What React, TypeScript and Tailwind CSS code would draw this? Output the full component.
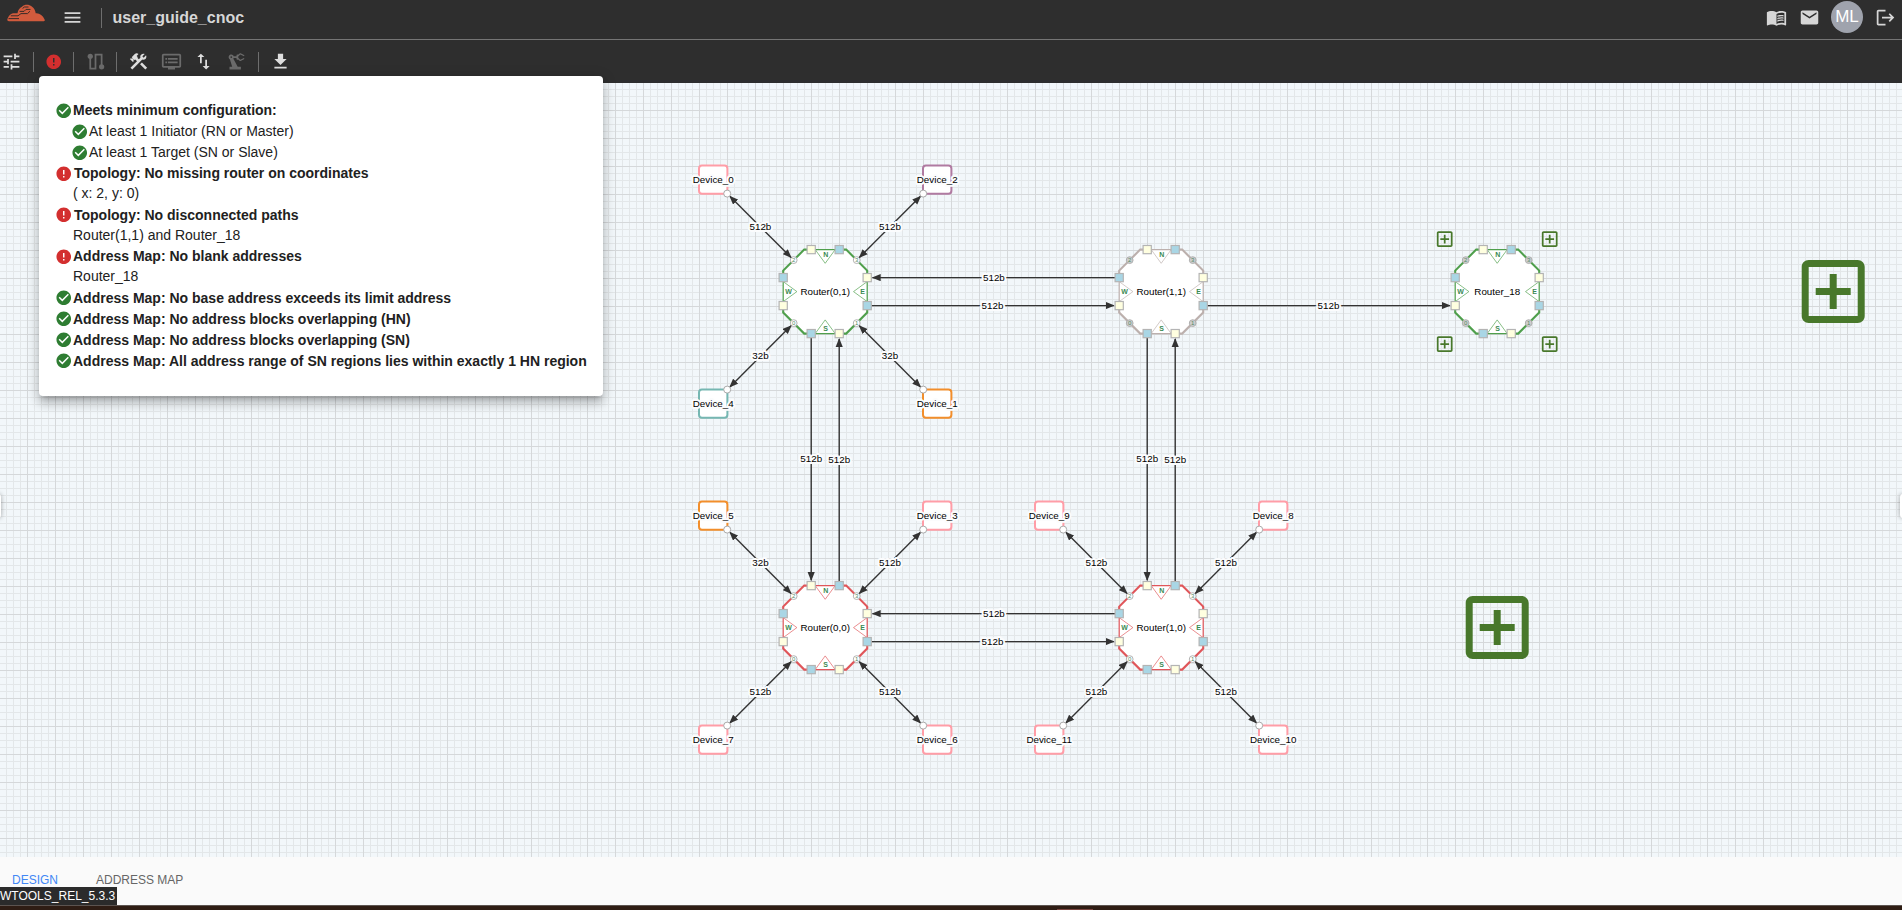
import type { ReactNode } from 'react';
import {
  MdCheckCircle,
  MdConstruction,
  MdDvr,
  MdEmail,
  MdError,
  MdFileDownload,
  MdImportExport,
  MdLogout,
  MdMenu,
  MdMenuBook,
  MdPrecisionManufacturing,
  MdTune,
} from 'react-icons/md';

const STEP = 336;
const ORIGIN_X = 825.2;
const ORIGIN_Y = 208.6;

const GREEN = '#4f9f4c';
const RED = '#e0565a';
const GRAY = '#bcb0ad';
const PINK = '#ff9da7';
const PURPLE = '#b07aa1';
const TEAL = '#76b7b2';
const ORANGE = '#f28e2b';

type Device = { name: string; color: string; sx: number; sy: number; width: string };
type RouterData = { name: string; col: number; row: number; color: string; devices: Device[]; expandable?: boolean };

const routers: RouterData[] = [
  {
    name: 'Router(0,1)', col: 0, row: 0, color: GREEN,
    devices: [
      { name: 'Device_0', color: PINK, sx: -1, sy: -1, width: '512b' },
      { name: 'Device_2', color: PURPLE, sx: 1, sy: -1, width: '512b' },
      { name: 'Device_4', color: TEAL, sx: -1, sy: 1, width: '32b' },
      { name: 'Device_1', color: ORANGE, sx: 1, sy: 1, width: '32b' },
    ],
  },
  { name: 'Router(1,1)', col: 1, row: 0, color: GRAY, devices: [] },
  { name: 'Router_18', col: 2, row: 0, color: GREEN, devices: [], expandable: true },
  {
    name: 'Router(0,0)', col: 0, row: 1, color: RED,
    devices: [
      { name: 'Device_5', color: ORANGE, sx: -1, sy: -1, width: '32b' },
      { name: 'Device_3', color: PINK, sx: 1, sy: -1, width: '512b' },
      { name: 'Device_7', color: PINK, sx: -1, sy: 1, width: '512b' },
      { name: 'Device_6', color: PINK, sx: 1, sy: 1, width: '512b' },
    ],
  },
  {
    name: 'Router(1,0)', col: 1, row: 1, color: RED,
    devices: [
      { name: 'Device_9', color: PINK, sx: -1, sy: -1, width: '512b' },
      { name: 'Device_8', color: PINK, sx: 1, sy: -1, width: '512b' },
      { name: 'Device_11', color: PINK, sx: -1, sy: 1, width: '512b' },
      { name: 'Device_10', color: PINK, sx: 1, sy: 1, width: '512b' },
    ],
  },
];

function Label({ x, y, children }: { x: number; y: number; children: ReactNode }) {
  return (
    <text
      x={x} y={y + 3.1} textAnchor="middle" fontSize="9.8" fill="#000"
      stroke="#fbfcfd" strokeWidth="4" strokeLinejoin="round" paintOrder="stroke"
    >
      {children}
    </text>
  );
}

function Link({ x1, y1, x2, y2, both }: { x1: number; y1: number; x2: number; y2: number; both?: boolean }) {
  return (
    <line
      x1={x1} y1={y1} x2={x2} y2={y2} stroke="#333" strokeWidth="1.4"
      markerEnd="url(#arrow)" markerStart={both ? 'url(#arrow)' : undefined}
    />
  );
}

function AddBox({ x, y, size }: { x: number; y: number; size: number }) {
  return (
    <svg x={x - size / 2} y={y - size / 2} width={size} height={size} viewBox="0 0 24 24">
      <path
        fill="#48782b"
        d="M19 3H5c-1.11 0-2 .9-2 2v14c0 1.1.89 2 2 2h14c1.1 0 2-.9 2-2V5c0-1.1-.9-2-2-2zm0 16H5V5h14v14zm-8-2h2v-4h4v-2h-4V7h-2v4H7v2h4z"
      />
    </svg>
  );
}

const ports = [
  { x: -14, y: -42, input: true },
  { x: 14, y: -42, input: false },
  { x: 42, y: -14, input: true },
  { x: 42, y: 14, input: false },
  { x: -14, y: 42, input: false },
  { x: 14, y: 42, input: true },
  { x: -42, y: -14, input: false },
  { x: -42, y: 14, input: true },
];

const corners = [
  { sx: -1, sy: -1, n: '2' },
  { sx: 1, sy: -1, n: '3' },
  { sx: -1, sy: 1, n: '0' },
  { sx: 1, sy: 1, n: '1' },
];

function RouterNode({ r }: { r: RouterData }) {
  const used = r.devices.length > 0;
  return (
    <g transform={`translate(${ORIGIN_X + r.col * STEP} ${ORIGIN_Y + r.row * STEP})`}>
      <path d="M-21-42H21L42-21V21L21 42H-21L-42 21V-21z" fill="#fff" />
      <path
        d="M-14-42H-21L-42-21V-14M14-42H21L42-21V-14M-14 42H-21L-42 21V14M14 42H21L42 21V14"
        fill="none" stroke={r.color} strokeWidth="2.1"
      />
      <path d="M-14-42H14M-14 42H14M-42-14V14M42-14V14" fill="none" stroke={r.color} strokeWidth="1.2" />
      <path
        d="M-10-42L0-28.3L10-42M-10 42L0 28.3L10 42M-42-10L-28.3 0L-42 10M42-10L28.3 0L42 10"
        fill="none" stroke={r.color} strokeWidth="0.9" opacity="0.75"
      />
      <g fontSize="7" fontWeight="700" fill="#3b8a52" textAnchor="middle">
        <text x="0.5" y="-34.8">N</text>
        <text x="0.5" y="39.2">S</text>
        <text x="-36.6" y="2.5">W</text>
        <text x="37.4" y="2.5">E</text>
      </g>
      {corners.map((c) => (
        <g key={c.n} transform={`translate(${c.sx * 31.5} ${c.sy * 31.5})`}>
          <circle r="3.4" fill={used ? '#fff' : '#cdcdcd'} stroke="#aaa" strokeWidth="0.9" />
          <text y="2.1" fontSize="6" textAnchor="middle" fill="#528a68">{c.n}</text>
        </g>
      ))}
      {ports.map((p) => (
        <rect
          key={`${p.x},${p.y}`} x={p.x - 4.1} y={p.y - 4.1} width="8.2" height="8.2"
          fill={p.input ? '#ffffe0' : '#a9d6e5'} stroke="#b4b4b4" strokeWidth="1.2"
        />
      ))}
      <text y="3.4" fontSize="9.8" textAnchor="middle" fill="#000">{r.name}</text>
      {r.devices.map((d) => (
        <g key={d.name}>
          <Link x1={d.sx * 34.2} y1={d.sy * 34.2} x2={d.sx * 95.3} y2={d.sy * 95.3} both />
          <Label x={d.sx * 64.8} y={d.sy * 64.8}>{d.width}</Label>
          <rect
            x={d.sx * 112 - 14.2} y={d.sy * 112 - 14.2} width="28.4" height="28.4" rx="3"
            fill="#fff" stroke={d.color} strokeWidth="2"
          />
          <circle cx={d.sx * 98} cy={d.sy * 98} r="3.5" fill="#fff" stroke="#aaa" strokeWidth="1" />
          <Label x={d.sx * 112} y={d.sy * 112}>{d.name}</Label>
        </g>
      ))}
      {r.expandable && corners.map((c) => <AddBox key={c.n} x={c.sx * 52.5} y={c.sy * 52.5} size={21} />)}
    </g>
  );
}

function Topology() {
  const x0 = ORIGIN_X;
  const x1 = ORIGIN_X + STEP;
  const x2 = ORIGIN_X + 2 * STEP;
  const y0 = ORIGIN_Y;
  const y1 = ORIGIN_Y + STEP;
  const midY = (y0 + y1) / 2;
  return (
    <svg className="block h-full w-full font-['Liberation_Sans',Arial,sans-serif]" width="1902" height="774">
      <defs>
        <pattern id="grid" x="27" y="27" width="28" height="28" patternUnits="userSpaceOnUse">
          <path d="M7.5 0V28M14.5 0V28M21.5 0V28M0 7.5H28M0 14.5H28M0 21.5H28" stroke="#e3e7e9" />
          <path d="M.5 0V28M0 .5H28" stroke="#d5d8da" />
        </pattern>
        <marker
          id="arrow" viewBox="0 0 10 8" refX="9" refY="4" markerWidth="9" markerHeight="7.6"
          markerUnits="userSpaceOnUse" orient="auto-start-reverse"
        >
          <path d="M0 0L10 4L0 8z" fill="#333" />
        </marker>
      </defs>
      <rect width="1902" height="774" fill="#f2f7fa" />
      <rect width="1902" height="774" fill="url(#grid)" />
      {[y0, y1].map((y) => (
        <g key={y}>
          <Link x1={x1 - 46} y1={y - 14} x2={x0 + 47.4} y2={y - 14} />
          <Link x1={x0 + 46} y1={y + 14} x2={x1 - 47.4} y2={y + 14} />
          <Label x={x0 + 168.7} y={y - 14}>512b</Label>
          <Label x={x0 + 167.3} y={y + 14}>512b</Label>
        </g>
      ))}
      <Link x1={x1 + 46} y1={y0 + 14} x2={x2 - 47.4} y2={y0 + 14} />
      <Label x={x1 + 167.3} y={y0 + 14}>512b</Label>
      {[x0, x1].map((x) => (
        <g key={x}>
          <Link x1={x - 14} y1={y0 + 46} x2={x - 14} y2={y1 - 47.4} />
          <Link x1={x + 14} y1={y1 - 46} x2={x + 14} y2={y0 + 47.4} />
          <Label x={x - 14} y={midY - 0.9}>512b</Label>
          <Label x={x + 14} y={midY + 0.4}>512b</Label>
        </g>
      ))}
      {routers.map((r) => <RouterNode key={r.name} r={r} />)}
      <AddBox x={ORIGIN_X + 3 * STEP} y={y0} size={84} />
      <AddBox x={x2} y={y1} size={84} />
    </svg>
  );
}

function Logo() {
  return (
    <svg className="ml-[7px] h-[18px] w-[38px] shrink-0" viewBox="0 0 38 18">
      <path
        fill="#d15b3d"
        d="M2 17.2C.4 17.2 0 16 .5 14.8C1.4 12.6 3.2 9.6 6 9.2H10.5C11 6 12.6 3.6 15 2.7C17.5.1 22 .2 24.8 2.4C27.6 4.2 28.4 7 28.7 9.2C32.6 8.8 35.6 11.2 37.6 15.4C38.2 16.6 37.4 17.2 36.2 17.2z"
      />
      <g fill="none" stroke="#3a2c28" strokeWidth="1">
        <path d="M1.5 14.6H12M3.8 11.8H11L14 9.6H20.5L23 7.2M12.6 7.4H17L19 5.4H23.5M15.6 4.4L17.5 3H21.5" />
      </g>
    </svg>
  );
}

function RouteIcon() {
  return (
    <svg className="size-[21px]" viewBox="0 0 24 24" fill="none" stroke="currentColor" strokeWidth="2">
      <path d="M6 6V20H12V4H19V18" />
      <circle cx="6" cy="6" r="3" fill="currentColor" stroke="none" />
      <circle cx="19" cy="18" r="3" fill="currentColor" stroke="none" />
    </svg>
  );
}

function Separator() {
  return <span className="h-5 w-px shrink-0 bg-[#6e6e6e]" />;
}

function Slot({ className, children }: { className: string; children: ReactNode }) {
  return <button className={`flex h-6 shrink-0 items-center justify-center ${className}`}>{children}</button>;
}

type Row =
  | { text: string; ok: boolean; kind: 'main' | 'sub' | 'topology' }
  | { text: string; kind: 'note' };

const rows: Row[] = [
  { kind: 'main', ok: true, text: 'Meets minimum configuration:' },
  { kind: 'sub', ok: true, text: 'At least 1 Initiator (RN or Master)' },
  { kind: 'sub', ok: true, text: 'At least 1 Target (SN or Slave)' },
  { kind: 'topology', ok: false, text: 'Topology: No missing router on coordinates' },
  { kind: 'note', text: '( x: 2, y: 0)' },
  { kind: 'topology', ok: false, text: 'Topology: No disconnected paths' },
  { kind: 'note', text: 'Router(1,1) and Router_18' },
  { kind: 'main', ok: false, text: 'Address Map: No blank addresses' },
  { kind: 'note', text: 'Router_18' },
  { kind: 'main', ok: true, text: 'Address Map: No base address exceeds its limit address' },
  { kind: 'main', ok: true, text: 'Address Map: No address blocks overlapping (HN)' },
  { kind: 'main', ok: true, text: 'Address Map: No address blocks overlapping (SN)' },
  { kind: 'main', ok: true, text: 'Address Map: All address range of SN regions lies within exactly 1 HN region' },
];

function ChecksPanel() {
  return (
    <div className="absolute left-[39px] top-[76px] h-80 w-[564px] rounded bg-white pt-[24px] text-[14px] text-[#212121] shadow-[0_5px_5px_-3px_rgba(0,0,0,0.2),0_8px_10px_1px_rgba(0,0,0,0.14),0_3px_14px_2px_rgba(0,0,0,0.12)]">
      {rows.map((row) =>
        row.kind === 'note' ? (
          <p key={row.text} className="h-[20.5px] whitespace-nowrap pl-[34px] leading-[18px]">{row.text}</p>
        ) : (
          <div
            key={row.text}
            className={row.kind === 'sub' ? 'flex h-[21px] items-center pl-8' : 'flex h-[21px] items-center pl-4 font-bold'}
          >
            {row.ok ? (
              <MdCheckCircle className="size-[17.5px] shrink-0 text-[#2e7d32]" />
            ) : (
              <MdError className="size-[17.5px] shrink-0 text-[#d32f2f]" />
            )}
            <span className={row.kind === 'topology' ? 'whitespace-nowrap pl-[1.5px]' : 'whitespace-nowrap pl-[0.5px]'}>
              {row.text}
            </span>
          </div>
        ),
      )}
    </div>
  );
}

export default function App() {
  return (
    <div className="relative flex h-[910px] w-[1902px] flex-col overflow-hidden bg-[#fafafa] font-['Liberation_Sans',Arial,sans-serif]">
      <header className="flex h-10 shrink-0 items-start border-b border-[#757575] bg-[#2e2e2e] text-[#d6d6d6]">
        <div className="flex h-[34px] w-full items-center">
          <div className="flex h-[34px] items-start pt-[4px]"><Logo /></div>
          <MdMenu className="ml-[16.5px] size-[21px] shrink-0" />
          <span className="ml-[18px] mt-[2px] h-5 w-px bg-[#6e6e6e]" />
          <h1 className="ml-[11px] pt-[2px] text-[16px] font-bold">user_guide_cnoc</h1>
          <div className="ml-auto flex items-center pr-[6.5px]">
            <MdMenuBook className="size-[21px]" />
            <MdEmail className="ml-[12px] size-[21px]" />
            <span className="ml-[11.5px] flex size-8 items-center justify-center rounded-full bg-[#9fa3ad] text-[17px] text-white">ML</span>
            <MdLogout className="ml-[11.5px] size-[21px]" />
          </div>
        </div>
      </header>
      <nav className="flex h-[43px] shrink-0 items-center bg-[#2e2e2e] text-[#dedede]">
        <Slot className="w-[22px]"><MdTune className="size-[21px]" /></Slot>
        <span className="w-[11px]" />
        <Separator />
        <Slot className="w-[39px] text-[#d32f2f]"><MdError className="size-[17.5px]" /></Slot>
        <Separator />
        <Slot className="w-[42px] text-[#6b6b6b]"><RouteIcon /></Slot>
        <Separator />
        <Slot className="ml-[5px] w-[33px]"><MdConstruction className="size-[21px]" /></Slot>
        <Slot className="w-[32px] text-[#6b6b6b]"><MdDvr className="size-[21px]" /></Slot>
        <Slot className="w-[32px]"><MdImportExport className="size-[21px]" /></Slot>
        <Slot className="w-[34px] text-[#6b6b6b]"><MdPrecisionManufacturing className="size-[21px]" /></Slot>
        <span className="w-[5px]" />
        <Separator />
        <Slot className="w-[43px]"><MdFileDownload className="size-[21px]" /></Slot>
      </nav>
      <main className="relative h-[774px] shrink-0 overflow-hidden">
        <Topology />
        <span className="absolute -left-[5px] top-[411px] h-6 w-1.5 rounded bg-white shadow-[0_0_5px_rgba(0,0,0,0.35)]" />
        <span className="absolute -right-1 top-[411px] h-6 w-1.5 rounded bg-white shadow-[0_0_5px_rgba(0,0,0,0.35)]" />
      </main>
      <footer className="flex h-12 shrink-0 flex-col bg-[#fafafa]">
        <div className="flex h-[30px] items-end pl-[12px] text-[12px] leading-[14px] text-[#666]">
          <span className="text-[#4287f5]">DESIGN</span>
          <span className="ml-[38px]">ADDRESS MAP</span>
        </div>
        <div className="flex h-[18px] w-[117px] items-center bg-[#2b2b2b] pb-px text-[12px] text-white">WTOOLS_REL_5.3.3</div>
      </footer>
      <div className="flex h-[5px] shrink-0 justify-center border-t border-[#5c5450] bg-[#2f1d14]">
        <span className="ml-[248px] mt-[3px] h-px w-9 bg-[#7a4640]" />
      </div>
      <ChecksPanel />
    </div>
  );
}
